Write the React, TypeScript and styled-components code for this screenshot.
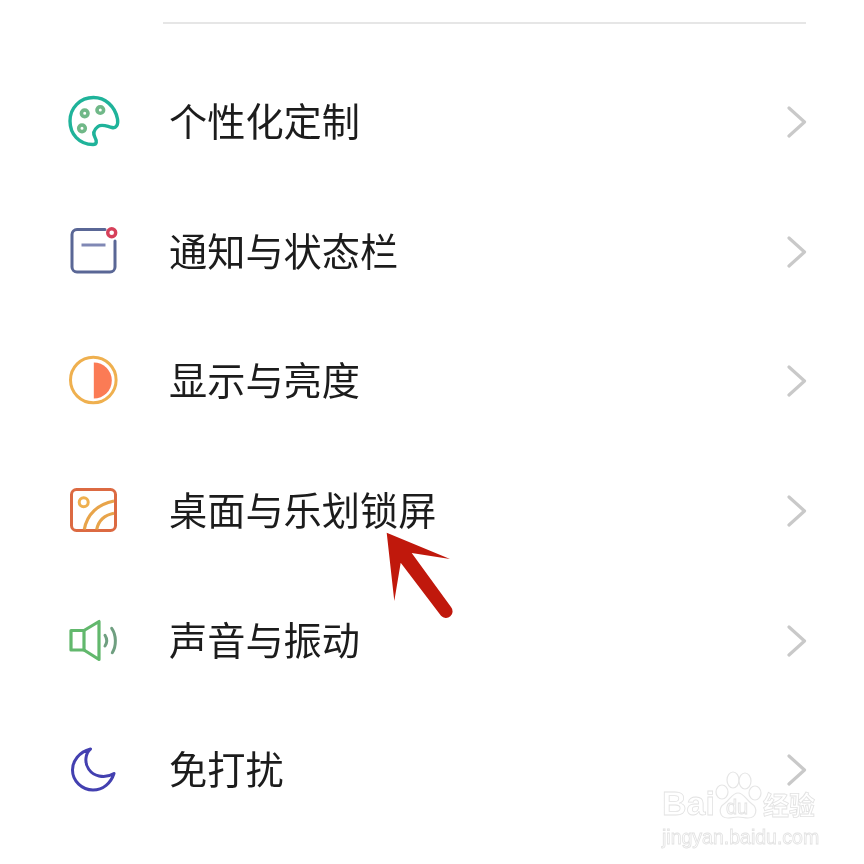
import { ReactNode } from 'react';
import styled, { createGlobalStyle } from 'styled-components';

const GlobalStyle = createGlobalStyle`
  html, body {
    margin: 0;
    padding: 0;
    background: #fff;
  }
`;

const PaletteIcon = () => (
  <IconSvg viewBox="0 0 56 56" fill="none" strokeLinecap="round" strokeLinejoin="round">
    <path
      d="M27 50.5C13 50.5 4 40 4 27C4 14 14 3.5 27.5 3.5C39 3.5 49 12 51.5 25C52.5 31 50 34.5 46 33.5C41 32.5 36 29.5 32 32.5C27.5 36 27 40 29 43.5C31 47 31 50.5 27 50.5Z"
      stroke="#1fb39a"
      strokeWidth="3.4"
    />
    <g stroke="#70b888" strokeWidth="3.6">
      <circle cx="18.7" cy="19.3" r="3.3" />
      <circle cx="34.3" cy="16" r="3.3" />
      <circle cx="16" cy="34.3" r="3.3" />
    </g>
  </IconSvg>
);

const NoticeIcon = () => (
  <IconSvg viewBox="0 0 56 56" fill="none" strokeLinecap="round">
    <path
      d="M39 5.5H11a5 5 0 0 0-5 5V43a5 5 0 0 0 5 5H44a5 5 0 0 0 5-5V17"
      stroke="#5a6796"
      strokeWidth="3"
    />
    <path d="M15.5 21H39.5" stroke="#8088b5" strokeWidth="3" strokeLinecap="butt" />
    <circle cx="45.7" cy="8.7" r="4" stroke="#d6405a" strokeWidth="3.4" />
  </IconSvg>
);

const DisplayIcon = () => (
  <IconSvg viewBox="0 0 56 56" fill="none">
    <circle cx="27.3" cy="27" r="22.8" stroke="#efb04f" strokeWidth="3" />
    <path d="M27.8 9.5A18 18 0 0 1 27.8 45.5Z" fill="#fb7b55" />
  </IconSvg>
);

const WallpaperIcon = () => (
  <IconSvg viewBox="0 0 56 56" fill="none">
    <rect x="5.5" y="6.5" width="44" height="41" rx="5" stroke="#dc6a42" strokeWidth="3" />
    <circle cx="17.7" cy="19.3" r="4.5" stroke="#efb04f" strokeWidth="3" />
    <path d="M18.3 46.5C21 31 32 21 48 18" stroke="#e8a44a" strokeWidth="3.2" />
    <path d="M30.7 46.5C32.5 38 38.5 32 48 30.3" stroke="#e8a44a" strokeWidth="3.2" />
  </IconSvg>
);

const SoundIcon = () => (
  <IconSvg viewBox="0 0 56 56" fill="none" strokeLinecap="round" strokeLinejoin="round">
    <path d="M5 17.5H18L33 8.5V46.5L18 37H5Z" stroke="#62b86d" strokeWidth="3.2" />
    <path d="M18 17.5V37" stroke="#62b86d" strokeWidth="3.2" />
    <path d="M39 22.3C41 25.5 41 30 39 33" stroke="#6f9f80" strokeWidth="3" />
    <path d="M45.7 15.3C50.5 22 50.5 33 46.3 39.7" stroke="#6f9f80" strokeWidth="3" />
  </IconSvg>
);

const MoonIcon = () => (
  <IconSvg viewBox="0 0 56 56" fill="none" strokeLinejoin="round">
    <path
      d="M24.5 7C13 10 6.5 19 6.5 28C6.5 39 16 48 27 48C37 48 45 41 48 31.5C44 34 38 35 33 34C24 32 19 24 20 16C20.5 12 22 9 24.5 7Z"
      stroke="#4340b0"
      strokeWidth="3"
    />
  </IconSvg>
);

type Item = { label: string; icon: ReactNode };

const items: Item[] = [
  { label: '个性化定制', icon: <PaletteIcon /> },
  { label: '通知与状态栏', icon: <NoticeIcon /> },
  { label: '显示与亮度', icon: <DisplayIcon /> },
  { label: '桌面与乐划锁屏', icon: <WallpaperIcon /> },
  { label: '声音与振动', icon: <SoundIcon /> },
  { label: '免打扰', icon: <MoonIcon /> },
];

export default function App() {
  return (
    <Page>
      <GlobalStyle />
      <Divider />
      <List>
        {items.map(({ label, icon }) => (
          <Row key={label}>
            {icon}
            <Label>{label}</Label>
            <Chevron viewBox="0 0 20 32" fill="none">
              <path
                d="M2 2L17.5 16L2 30"
                stroke="#c9c9c9"
                strokeWidth="3.2"
                strokeLinecap="round"
                strokeLinejoin="round"
              />
            </Chevron>
          </Row>
        ))}
      </List>

      <Arrow viewBox="0 0 80 100">
        <path
          d="M6.7 7.7L70 34L31.7 28L71 82A6.5 6.5 0 0 1 61 90.7L20.7 37.7L14.3 76Z"
          fill="#c0180c"
        />
      </Arrow>

      <Watermark>
        <LogoLine>
          <LogoWord>Bai</LogoWord>
          <PawMark>
            <svg width="48" height="52" viewBox="0 0 48 52" fill="#fff" stroke="#e6e6e6" strokeWidth="1.2">
              <ellipse cx="8" cy="22" rx="6" ry="7" />
              <ellipse cx="19" cy="10" rx="6" ry="8" />
              <ellipse cx="31" cy="11" rx="6" ry="8" />
              <ellipse cx="41" cy="23" rx="6" ry="7" />
              <path d="M24 23C30 23 32 30 38 34C44 38 43 48 34 48C30 48 28 47 24 47C20 47 18 48 14 48C5 48 4 38 10 34C16 30 18 23 24 23Z" />
            </svg>
            <PawText>du</PawText>
          </PawMark>
          <LogoCjk>经验</LogoCjk>
        </LogoLine>
        <SiteLine>jingyan.baidu.com</SiteLine>
      </Watermark>
    </Page>
  );
}

const Page = styled.div`
  position: relative;
  width: 864px;
  height: 864px;
  overflow: hidden;
  background: #fff;
  padding-top: 22px;
  box-sizing: border-box;
  font-family: 'Noto Sans CJK SC', 'Liberation Sans', sans-serif;
  filter: blur(0.35px);
`;

const Divider = styled.div`
  height: 1.5px;
  margin: 0 58px 0 163px;
  background: #e6e6e6;
`;

const List = styled.div`
  display: flex;
  flex-direction: column;
  margin-top: 34px;
`;

const Row = styled.div`
  display: flex;
  align-items: center;
  height: 129.6px;
  padding: 0 57px 0 66px;
`;

const IconSvg = styled.svg`
  flex: none;
  width: 56px;
  height: 56px;
`;

const Label = styled.div`
  flex: 1;
  margin: 0 0 4px 47px;
  font-size: 38.2px;
  line-height: 48px;
  color: #1c1c1c;
`;

const Chevron = styled.svg`
  flex: none;
  width: 20px;
  height: 32px;
`;

const Arrow = styled.svg`
  position: absolute;
  left: 380px;
  top: 525px;
  width: 80px;
  height: 100px;
`;

const Watermark = styled.div`
  position: absolute;
  left: 662px;
  top: 770px;
  width: 160px;
  display: flex;
  flex-direction: column;
  font-family: 'Liberation Sans', sans-serif;
  color: #fff;
  -webkit-text-stroke: 0.8px #e2e2e2;
`;

const LogoLine = styled.div`
  display: flex;
  align-items: flex-end;
  height: 52px;
`;

const LogoWord = styled.span`
  width: 52px;
  font-size: 34px;
  line-height: 38px;
  font-weight: 700;
`;

const PawMark = styled.div`
  position: relative;
  flex: none;
  width: 48px;
  height: 52px;
`;

const PawText = styled.span`
  position: absolute;
  left: 12px;
  top: 27px;
  font-size: 20px;
  line-height: 20px;
`;

const LogoCjk = styled.span`
  margin-left: 1px;
  font-family: 'Noto Sans CJK SC', sans-serif;
  font-size: 26px;
  line-height: 36px;
  font-weight: 700;
`;

const SiteLine = styled.div`
  margin-top: 3px;
  font-size: 19.5px;
  line-height: 24px;
  white-space: nowrap;
`;
